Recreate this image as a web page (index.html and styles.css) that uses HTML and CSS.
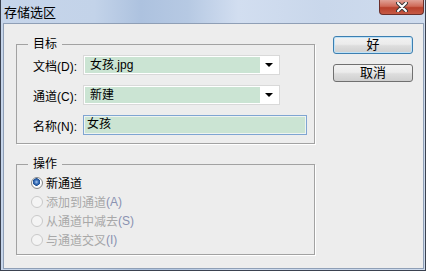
FILE: index.html
```html
<!DOCTYPE html>
<html>
  <head>
    <title>存储选区</title>
    <link rel="stylesheet" href="styles.css">
  </head>
  <body>
    <div class="window">
      <div class="titlebar">
        <span class="title">存储选区</span>
        <div class="close-btn">
          <svg width="12" height="10" viewBox="0 0 12 10">
            <path d="M2 1 L10 9 M10 1 L2 9" stroke="#3a3a3a" stroke-width="4" stroke-linecap="round" />
            <path d="M2 1 L10 9 M10 1 L2 9" stroke="#ffffff" stroke-width="2" stroke-linecap="round" />
          </svg>
        </div>
      </div>

      <div class="client">
        <div class="groups">
          <fieldset class="group target-group">
            <legend>目标</legend>
            <div class="field-list">
              <div class="field-row">
                <span class="field-label">文档(D):</span>
                <div class="select">
                  <span class="select-value">女孩.jpg</span>
                  <span class="select-arrow"></span>
                </div>
              </div>
              <div class="field-row">
                <span class="field-label">通道(C):</span>
                <div class="select">
                  <span class="select-value">新建</span>
                  <span class="select-arrow"></span>
                </div>
              </div>
              <div class="field-row">
                <span class="field-label">名称(N):</span>
                <div class="text-input">女孩</div>
              </div>
            </div>
          </fieldset>

          <fieldset class="group ops-group">
            <legend>操作</legend>
            <div class="radio checked"><span class="radio-dot"></span>新通道</div>
            <div class="radio disabled"><span class="radio-dot"></span>添加到通道<span class="key">(A)</span></div>
            <div class="radio disabled"><span class="radio-dot"></span>从通道中减去<span class="key">(S)</span></div>
            <div class="radio disabled"><span class="radio-dot"></span>与通道交叉<span class="key">(I)</span></div>
          </fieldset>
        </div>

        <div class="buttons">
          <button class="btn btn-default">好</button>
          <button class="btn">取消</button>
        </div>
      </div>
    </div>
  </body>
</html>
```

FILE: styles.css
```css
* {
  margin: 0;
  padding: 0;
  box-sizing: border-box;
}

body {
  width: 427px;
  height: 272px;
  background: #ffffff;
  font-family: "Liberation Sans", "Noto Sans CJK SC", sans-serif;
  font-size: 12px;
  color: #000000;
}

.window {
  width: 426px;
  height: 271px;
  display: flex;
  flex-direction: column;
  border: 1px solid #3b4250;
  border-top: none;
  padding: 0 1px 1px 2px;
  background: linear-gradient(
    90deg,
    #c6d5ea 0%,
    #c3d3e9 22%,
    #adc2df 33%,
    #b6c9e3 44%,
    #d2def0 56%,
    #c9d7eb 76%,
    #cfdcee 100%
  );
}

.titlebar {
  height: 23px;
  display: flex;
  justify-content: space-between;
  align-items: flex-start;
}

.title {
  font-size: 13px;
  line-height: 23px;
  padding-top: 1px;
  padding-left: 1px;
}

.close-btn {
  width: 45px;
  height: 15px;
  display: flex;
  align-items: center;
  justify-content: center;
  border: 1px solid #6b2f2a;
  border-top: none;
  border-radius: 0 0 4px 4px;
  background: linear-gradient(#e0a196 0%, #cf6a58 45%, #b8402c 55%, #c65a44 100%);
}

.client {
  flex: 1;
  display: flex;
  gap: 18px;
  padding: 12px 10px 0 12px;
  border: 1px solid #8f9fb6;
  background: #ededed;
}

.groups {
  width: 299px;
  display: flex;
  flex-direction: column;
  gap: 12px;
}

.group {
  min-width: 0;
  border: 1px solid #a2a2a2;
  box-shadow: 1px 1px 0 #ffffff;
}

.group legend {
  font-size: 12px;
  line-height: 16px;
  padding: 0 5px;
  background: #ededed;
}

.target-group {
  padding: 3px 0 8px 16px;
}

.target-group legend {
  margin-left: -5px;
}

.ops-group {
  padding: 1px 0 5px 14px;
}

.ops-group legend {
  margin-left: -3px;
}

.field-list {
  display: flex;
  flex-direction: column;
  gap: 10px;
}

.field-row {
  height: 20px;
  display: flex;
  align-items: center;
}

.field-label {
  width: 50px;
  white-space: nowrap;
}

.select {
  width: 197px;
  height: 20px;
  display: flex;
  padding: 1px;
  border: 1px solid #d9d9d9;
  background: #ffffff;
}

.select-value {
  flex: 1;
  padding-left: 5px;
  line-height: 16px;
  background: #cbe4d3;
}

.select-arrow {
  width: 18px;
  display: flex;
  align-items: center;
  justify-content: center;
}

.select-arrow::after {
  content: "";
  border-top: 4px solid #000000;
  border-left: 4px solid transparent;
  border-right: 4px solid transparent;
}

.text-input {
  width: 224px;
  height: 20px;
  padding-left: 3px;
  line-height: 16px;
  border: 1px solid #7fa5d2;
  box-shadow: inset 0 0 0 1px #eef4f0;
  background: #cbe4d3;
}

.radio {
  height: 19px;
  display: flex;
  align-items: center;
  white-space: nowrap;
}

.radio-dot {
  width: 12px;
  height: 12px;
  margin-right: 3px;
  border-radius: 50%;
  border: 1px solid #c9c9c9;
  background: #f4f4f4;
}

.radio.checked .radio-dot {
  border-color: #8a8a8a;
  background: radial-gradient(circle at 45% 40%, #a9c8ee 0, #3a6fb8 2px, #1d4f93 3.5px, #ffffff 4px, #e4e4e4 100%);
}

.radio.disabled {
  color: #a8a8a8;
}

.radio .key {
  color: #8a92b1;
}

.buttons {
  display: flex;
  flex-direction: column;
  gap: 10px;
}

.btn {
  width: 80px;
  height: 18px;
  font-family: "Liberation Sans", "Noto Sans CJK SC", sans-serif;
  font-size: 13px;
  line-height: 16px;
  color: #000000;
  border: 1px solid #707070;
  border-radius: 3px;
  background: linear-gradient(#f2f2f2 0%, #ebebeb 45%, #dddddd 55%, #cfcfcf 100%);
}

.btn-default {
  border-color: #3c7fb1;
  box-shadow: inset 0 0 0 1px #bfe2f7;
}
```
